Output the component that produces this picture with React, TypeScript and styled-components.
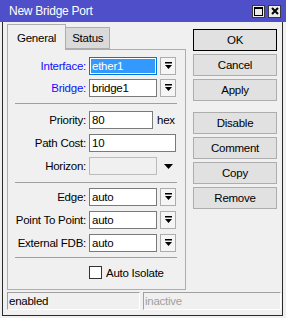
import React from 'react'
import styled, { createGlobalStyle } from 'styled-components'

const GlobalStyle = createGlobalStyle`
  html, body {
    margin: 0;
    padding: 0;
    background: #f0f0f0;
  }
  body {
    font-family: "Liberation Sans", Arial, sans-serif;
    font-size: 11.5px;
    letter-spacing: -0.25px;
    color: #000;
  }
`

const Window = styled.div`
  width: 286px;
  height: 318px;
  background: #f0f0f0;
  display: flex;
  flex-direction: column;
`

const TitleBar = styled.div`
  height: 22px;
  flex: none;
  background: #4f4fca;
  color: #fff;
  display: flex;
  align-items: center;
  padding: 0 5px 0 9px;
  font-size: 12px;
`

const TitleText = styled.div`
  flex: 1;
`

const TitleButtons = styled.div`
  display: flex;
  gap: 3px;
`

const TitleButton = styled.div`
  width: 13px;
  height: 13px;
  box-sizing: border-box;
  border: 1px solid #3a3a3a;
  background: #ececec;
  display: flex;
  align-items: center;
  justify-content: center;
`

const Body = styled.div`
  flex: 1;
  margin: 0 3px 2px 2px;
  border: 1px solid #2a2a2a;
  border-top: none;
  display: flex;
  flex-direction: column;
  padding: 2px 0 5px 4px;
`

const Main = styled.div`
  display: flex;
  gap: 7px;
`

const LeftColumn = styled.div`
  width: 179px;
  display: flex;
  flex-direction: column;
`

const TabBar = styled.div`
  display: flex;
  align-items: flex-end;
  height: 25px;
`

const Tab = styled.div<{ $active?: boolean }>`
  box-sizing: border-box;
  height: ${(p) => (p.$active ? 26 : 22)}px;
  margin-bottom: ${(p) => (p.$active ? -1 : 0)}px;
  padding: 0 ${(p) => (p.$active ? 9 : 6)}px;
  border: 1px solid #adadad;
  border-bottom: ${(p) => (p.$active ? 'none' : '1px solid #adadad')};
  background: ${(p) => (p.$active ? '#f0f0f0' : '#dadada')};
  display: flex;
  align-items: center;
  position: relative;
  z-index: ${(p) => (p.$active ? 1 : 0)};
  & + & {
    margin-left: -1px;
  }
`

const Panel = styled.div`
  height: 241px;
  box-sizing: border-box;
  border: 1px solid #adadad;
  display: flex;
  flex-direction: column;
  padding-top: 7px;
`

const Section = styled.div<{ $gap: number }>`
  display: flex;
  flex-direction: column;
  gap: ${(p) => p.$gap}px;
`

const Separator = styled.div<{ $above: number; $below: number }>`
  height: 1px;
  background: #a0a0a0;
  margin: ${(p) => p.$above}px 8px ${(p) => p.$below}px 7px;
`

const Row = styled.div`
  display: flex;
  align-items: center;
  height: 18px;
`

const Label = styled.div<{ $blue?: boolean }>`
  width: 78px;
  margin-right: 3px;
  text-align: right;
  white-space: nowrap;
  color: ${(p) => (p.$blue ? '#1010ff' : '#000')};
`

const Field = styled.div<{ $w: number; $state?: 'focus' | 'disabled' }>`
  width: ${(p) => p.$w}px;
  height: 18px;
  box-sizing: border-box;
  border: 1px solid
    ${(p) => (p.$state === 'focus' ? '#0078d7' : p.$state === 'disabled' ? '#bcbcbc' : '#7a7a7a')};
  background: ${(p) => (p.$state === 'disabled' ? '#f0f0f0' : '#fff')};
  padding: ${(p) => (p.$state === 'focus' ? '1px' : '0 0 0 2px')};
  line-height: 16px;
  white-space: nowrap;
  overflow: hidden;
`

const Selection = styled.div`
  height: 100%;
  background: #3399ff;
  color: #fff;
  padding-left: 1px;
  line-height: 14px;
`

const DropButton = styled.div`
  width: 16px;
  height: 18px;
  box-sizing: border-box;
  margin-left: 3px;
  border: 1px solid #adadad;
  background: #f5f5f5;
  display: flex;
  align-items: center;
  justify-content: center;
`

const Suffix = styled.div`
  margin-left: 4px;
`

const ArrowSlot = styled.div`
  width: 16px;
  margin-left: 3px;
  display: flex;
  justify-content: center;
`

const CheckRow = styled.label`
  display: flex;
  align-items: center;
  height: 13px;
  margin-left: 81px;
  gap: 4px;
`

const CheckBox = styled.span`
  width: 13px;
  height: 13px;
  box-sizing: border-box;
  border: 1px solid #333;
  background: #fff;
`

const ButtonColumn = styled.div`
  width: 84px;
  display: flex;
  flex-direction: column;
  padding-top: 5px;
`

const ButtonGroup = styled.div<{ $top?: number }>`
  display: flex;
  flex-direction: column;
  gap: 3px;
  margin-top: ${(p) => p.$top ?? 0}px;
`

const Button = styled.div<{ $primary?: boolean }>`
  height: 22px;
  box-sizing: border-box;
  border: 1px solid ${(p) => (p.$primary ? '#000' : '#adadad')};
  background: #e1e1e1;
  display: flex;
  align-items: center;
  justify-content: center;
`

const StatusBar = styled.div`
  display: flex;
  gap: 3px;
  margin-top: 2px;
  margin-right: 1px;
`

const StatusCell = styled.div<{ $w: number; $muted?: boolean }>`
  width: ${(p) => p.$w}px;
  height: 18px;
  box-sizing: border-box;
  border-top: 1px solid #a0a0a0;
  border-left: 1px solid #a0a0a0;
  border-bottom: 1px solid #fff;
  border-right: 1px solid #fff;
  padding-left: 1px;
  line-height: 16px;
  color: ${(p) => (p.$muted ? '#a0a0a0' : '#000')};
`

const ComboIcon = () => (
  <svg width="7" height="8" viewBox="0 0 7 8">
    <rect x="0" y="0" width="7" height="1.5" fill="#000" />
    <polygon points="0,3 7,3 3.5,7" fill="#000" />
  </svg>
)

const DownArrow = () => (
  <svg width="9" height="5" viewBox="0 0 9 5">
    <polygon points="0,0 9,0 4.5,5" fill="#000" />
  </svg>
)

const ComboRow = ({ label, value, blue, focused }: { label: string; value: string; blue?: boolean; focused?: boolean }) => (
  <Row>
    <Label $blue={blue}>{label}</Label>
    <Field $w={68} $state={focused ? 'focus' : undefined}>
      {focused ? <Selection>{value}</Selection> : value}
    </Field>
    <DropButton>
      <ComboIcon />
    </DropButton>
  </Row>
)

const App: React.FunctionComponent = () => {
  return (
    <Window>
      <GlobalStyle />
      <TitleBar>
        <TitleText>New Bridge Port</TitleText>
        <TitleButtons>
          <TitleButton>
            <svg width="9" height="9" viewBox="0 0 9 9">
              <rect x="0.5" y="0.5" width="8" height="8" fill="none" stroke="#000" />
              <rect x="0" y="0" width="9" height="2" fill="#000" />
            </svg>
          </TitleButton>
          <TitleButton>
            <svg width="8" height="8" viewBox="0 0 8 8">
              <path d="M1 1 L7 7 M7 1 L1 7" stroke="#000" strokeWidth="2" />
            </svg>
          </TitleButton>
        </TitleButtons>
      </TitleBar>
      <Body>
        <Main>
          <LeftColumn>
            <TabBar>
              <Tab $active>General</Tab>
              <Tab>Status</Tab>
            </TabBar>
            <Panel>
              <Section $gap={4}>
                <ComboRow label="Interface:" value="ether1" blue focused />
                <ComboRow label="Bridge:" value="bridge1" blue />
              </Section>
              <Separator $above={6} $below={7} />
              <Section $gap={5}>
                <Row>
                  <Label>Priority:</Label>
                  <Field $w={64}>80</Field>
                  <Suffix>hex</Suffix>
                </Row>
                <Row>
                  <Label>Path Cost:</Label>
                  <Field $w={87}>10</Field>
                </Row>
                <Row>
                  <Label>Horizon:</Label>
                  <Field $w={68} $state="disabled" />
                  <ArrowSlot>
                    <DownArrow />
                  </ArrowSlot>
                </Row>
              </Section>
              <Separator $above={7} $below={5} />
              <Section $gap={5}>
                <ComboRow label="Edge:" value="auto" />
                <ComboRow label="Point To Point:" value="auto" />
                <ComboRow label="External FDB:" value="auto" />
              </Section>
              <Separator $above={5} $below={8} />
              <CheckRow>
                <CheckBox />
                <span>Auto Isolate</span>
              </CheckRow>
            </Panel>
          </LeftColumn>
          <ButtonColumn>
            <ButtonGroup>
              <Button $primary>OK</Button>
              <Button>Cancel</Button>
              <Button>Apply</Button>
            </ButtonGroup>
            <ButtonGroup $top={11}>
              <Button>Disable</Button>
              <Button>Comment</Button>
              <Button>Copy</Button>
              <Button>Remove</Button>
            </ButtonGroup>
          </ButtonColumn>
        </Main>
        <StatusBar>
          <StatusCell $w={133}>enabled</StatusCell>
          <StatusCell $w={138} $muted>
            inactive
          </StatusCell>
        </StatusBar>
      </Body>
    </Window>
  )
}

export default App
